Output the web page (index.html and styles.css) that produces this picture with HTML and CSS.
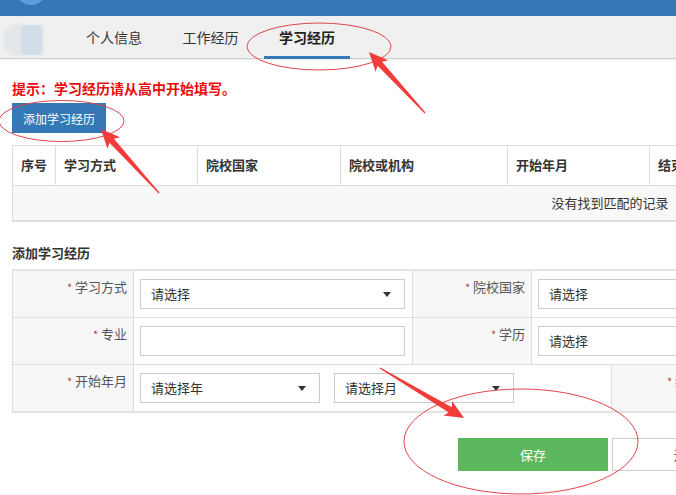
FILE: index.html
```html
<!DOCTYPE html>
<html lang="zh-CN">
<head>
<meta charset="utf-8">
<title>学习经历</title>
<link rel="stylesheet" href="styles.css">
</head>
<body>
<header class="topbar"><div class="avatar"></div></header>
<nav class="tabbar">
  <div class="logo"><span class="logo-a"></span><span class="logo-b"></span></div>
  <ul class="tabs">
    <li class="tab">个人信息</li>
    <li class="tab">工作经历</li>
    <li class="tab active">学习经历</li>
  </ul>
</nav>
<main class="main">
  <p class="hint">提示：学习经历请从高中开始填写。</p>
  <button class="btn btn-primary" type="button">添加学习经历</button>

  <div class="list">
    <div class="list-head">
      <div class="th">序号</div>
      <div class="th">学习方式</div>
      <div class="th">院校国家</div>
      <div class="th">院校或机构</div>
      <div class="th">开始年月</div>
      <div class="th">结束年月</div>
      <div class="th">学历</div>
      <div class="th">专业</div>
      <div class="th">操作</div>
    </div>
    <div class="list-empty">没有找到匹配的记录</div>
  </div>

  <h3 class="section-title">添加学习经历</h3>
  <div class="form">
    <div class="frow frow-a">
      <div class="flabel"><span class="req">*</span> 学习方式</div>
      <div class="fvalue"><div class="select"><span>请选择</span><i class="caret"></i></div></div>
      <div class="flabel"><span class="req">*</span> 院校国家</div>
      <div class="fvalue"><div class="select"><span>请选择</span><i class="caret"></i></div></div>
      <div class="flabel"><span class="req">*</span> 院校或机构</div>
      <div class="fvalue"><div class="input"></div></div>
    </div>
    <div class="frow frow-a">
      <div class="flabel"><span class="req">*</span> 专业</div>
      <div class="fvalue"><div class="input"></div></div>
      <div class="flabel"><span class="req">*</span> 学历</div>
      <div class="fvalue"><div class="select"><span>请选择</span><i class="caret"></i></div></div>
      <div class="flabel">学位</div>
      <div class="fvalue"><div class="select"><span>请选择</span><i class="caret"></i></div></div>
    </div>
    <div class="frow frow-b">
      <div class="flabel"><span class="req">*</span> 开始年月</div>
      <div class="fvalue pair">
        <div class="select w180"><span>请选择年</span><i class="caret"></i></div>
        <div class="select w180"><span>请选择月</span><i class="caret"></i></div>
      </div>
      <div class="flabel"><span class="req">*</span> 结束年月</div>
      <div class="fvalue pair">
        <div class="select w180"><span>请选择年</span><i class="caret"></i></div>
        <div class="select w180"><span>请选择月</span><i class="caret"></i></div>
      </div>
    </div>
  </div>

  <div class="actions">
    <button class="btn btn-save" type="button">保存</button>
    <button class="btn btn-back" type="button">返回</button>
  </div>
</main>

<svg class="marks" width="676" height="495" viewBox="0 0 676 495" aria-hidden="true">
  <g fill="none" stroke="#e0454b" stroke-width="1">
    <ellipse cx="319" cy="46.5" rx="72" ry="23.5"/>
    <ellipse cx="61.5" cy="121" rx="62.5" ry="20.5"/>
    <ellipse cx="521" cy="441.5" rx="117" ry="52.5"/>
  </g>
  <g fill="#f23b3b">
    <polygon transform="translate(425 113) rotate(227.45)" points="0,-0.6 66.8,-3 63.8,-8.5 82.8,0 63.8,8.5 66.8,3 0,0.6"/>
    <polygon transform="translate(159 193) rotate(227.8)" points="0,-0.6 70.4,-3 67.4,-8.5 86.4,0 67.4,8.5 70.4,3 0,0.6"/>
    <polygon transform="translate(380 368) rotate(30.76)" points="0,-0.6 81.8,-3 78.8,-8.5 97.8,0 78.8,8.5 81.8,3 0,0.6"/>
  </g>
</svg>
</body>
</html>
```

FILE: styles.css
```css
html {
  overflow: hidden;
}

body {
  margin: 0;
  min-height: 495px;
  position: relative;
  font-family: "Microsoft YaHei", "Noto Sans CJK SC", "Noto Sans", sans-serif;
  font-size: 13px;
  color: #333;
  background: #fff;
}

.topbar {
  height: 16px;
  background: #3479b6;
  overflow: hidden;
}

.avatar {
  width: 32px;
  height: 32px;
  margin: -27px 0 0 15px;
  border-radius: 50%;
  background: #5b9be0;
}

.tabbar {
  display: flex;
  align-items: stretch;
  height: 42px;
  background: #f0f0f0;
  border-bottom: 1px solid #cfcfcf;
  box-shadow: 0 1px 3px rgba(0, 0, 0, 0.07);
}

.logo {
  position: relative;
  width: 47px;
  height: 32px;
  margin: 8px 0 0 3px;
  filter: blur(1.2px);
}

.logo-a {
  position: absolute;
  left: 0;
  top: 0;
  width: 28px;
  height: 32px;
  border-radius: 50%;
  background: #e2e5ea;
}

.logo-b {
  position: absolute;
  left: 18px;
  top: 1px;
  width: 22px;
  height: 30px;
  border-radius: 3px;
  background: #d3dde8;
}

.tabs {
  display: flex;
  gap: 10.5px;
  margin: 0 0 0 21px;
  padding: 0;
  list-style: none;
}

.tab {
  box-sizing: border-box;
  height: 43px;
  margin-bottom: -1px;
  padding: 0 15px;
  line-height: 42px;
  font-size: 14px;
  color: #333;
  border-bottom: 3px solid transparent;
}

.tab.active {
  font-weight: bold;
  color: #222;
  border-bottom-color: #3479b6;
}

.main {
  width: 1196px;
  padding: 0 0 30px 12px;
}

.hint {
  margin: 19px 0 0;
  line-height: 20px;
  font-size: 14px;
  font-weight: bold;
  color: #e80d0d;
}

.btn {
  font-family: inherit;
  border: none;
  cursor: pointer;
}

.btn-primary {
  display: block;
  height: 30px;
  margin-top: 5px;
  padding: 0 11px;
  font-size: 12px;
  color: #fff;
  background: #3479b6;
}

.list {
  margin-top: 12px;
  border-left: 1px solid #ddd;
  border-right: 1px solid #ddd;
}

.list-head {
  display: grid;
  grid-template-columns: 42px 142px 143px 167px 142px 142px 140px 140px 1fr;
  height: 41px;
  box-sizing: border-box;
  border-top: 1px solid #ddd;
  border-bottom: 1px solid #ddd;
}

.th {
  padding-left: 8px;
  line-height: 37px;
  font-weight: bold;
  color: #333;
  border-left: 1px solid #ddd;
}

.th:first-child {
  border-left: none;
}

.list-empty {
  height: 34px;
  line-height: 34px;
  text-align: center;
  background: #f8f8f8;
  border-bottom: 2px solid #dedede;
}

.section-title {
  margin: 21px 0 0;
  line-height: 20px;
  font-size: 13px;
  font-weight: bold;
  color: #333;
}

.form {
  margin-top: 6px;
  border-top: 2px solid #e3e3e3;
  border-bottom: 2px solid #e3e3e3;
  border-left: 1px solid #ddd;
  border-right: 1px solid #ddd;
}

.frow {
  display: grid;
  border-bottom: 1px solid #ddd;
}

.frow:last-child {
  border-bottom: none;
}

.frow-a {
  grid-template-columns: 120px 279px 119px 280px 119px 1fr;
}

.frow-b {
  grid-template-columns: 120px 478px 122px 1fr;
}

.flabel {
  box-sizing: border-box;
  padding: 7px 6px 0 0;
  min-height: 46px;
  line-height: 18px;
  text-align: right;
  color: #555;
  background: #f7f7f7;
  border-left: 1px solid #ddd;
}

.flabel:first-child {
  border-left: none;
}

.req {
  font-size: 11px;
  color: #a94442;
}

.fvalue {
  padding: 8px 7px 8px 6px;
  background: #fff;
  border-left: 1px solid #ddd;
}

.pair {
  display: flex;
  gap: 14px;
}

.select,
.input {
  box-sizing: border-box;
  height: 30px;
  border: 1px solid #ccc;
  background: #fff;
}

.select {
  display: flex;
  align-items: center;
  justify-content: space-between;
  padding: 0 13px 2px 10px;
  color: #333;
}

.w180 {
  width: 180px;
}

.caret {
  width: 0;
  height: 0;
  margin-top: 2px;
  border-left: 4px solid transparent;
  border-right: 4px solid transparent;
  border-top: 5px solid #333;
}

.actions {
  display: flex;
  justify-content: center;
  gap: 4px;
  margin-top: 25px;
}

.btn-save,
.btn-back {
  box-sizing: border-box;
  width: 150px;
  height: 33px;
  font-size: 13px;
}

.btn-save {
  color: #fff;
  background: #5cb85c;
}

.btn-back {
  color: #333;
  background: #fff;
  border: 1px solid #ccc;
}

.marks {
  position: absolute;
  top: 0;
  left: 0;
  pointer-events: none;
}
```
